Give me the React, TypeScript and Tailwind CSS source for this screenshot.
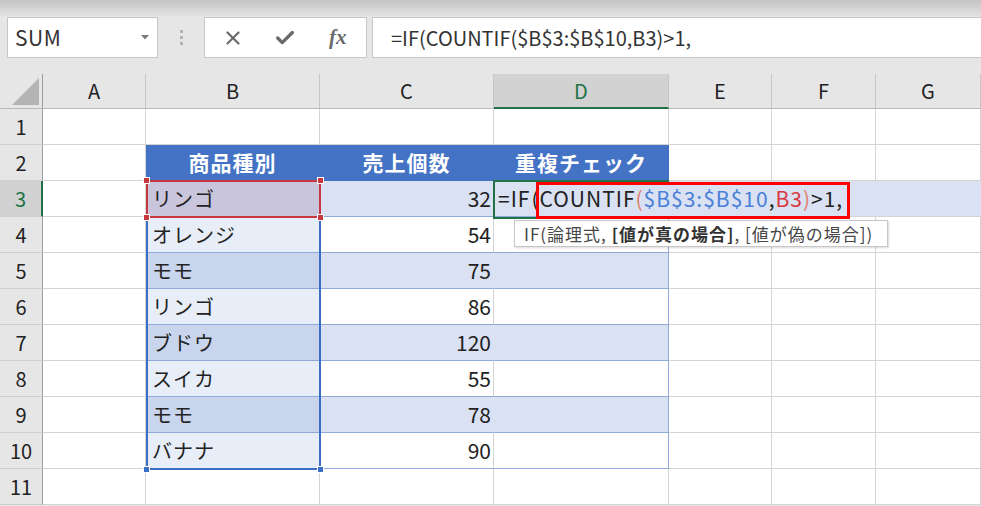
import { X, Check } from "lucide-react";

const rows = [
  { n: 3, name: "リンゴ", qty: 32 },
  { n: 4, name: "オレンジ", qty: 54 },
  { n: 5, name: "モモ", qty: 75 },
  { n: 6, name: "リンゴ", qty: 86 },
  { n: 7, name: "ブドウ", qty: 120 },
  { n: 8, name: "スイカ", qty: 55 },
  { n: 9, name: "モモ", qty: 78 },
  { n: 10, name: "バナナ", qty: 90 },
];

const cols = ["A", "B", "C", "D", "E", "F", "G"];

const gridCell = "border-r border-b border-[#d4d4d4] bg-white";

function RowHeader({ n, active }: { n: number; active?: boolean }) {
  return (
    <div
      className={
        active
          ? "flex items-center justify-center border-b border-b-[#cfcfcf] border-r-2 border-r-[#217346] bg-[#d2d2d2] text-[20px] leading-none text-[#217346]"
          : "flex items-center justify-center border-b border-b-[#cfcfcf] border-r border-r-[#9e9e9e] bg-[#e6e6e6] text-[20px] leading-none text-[#222]"
      }
    >
      {n}
    </div>
  );
}

function Handle({ className }: { className: string }) {
  return <div className={className} />;
}

export default function App() {
  return (
    <div className="relative h-[506px] w-[981px] overflow-hidden bg-[#e6e6e6] font-['Noto_Sans_CJK_JP','Noto_Sans',sans-serif] text-[#222]">
      {/* top strip */}
      <div className="h-[16px] bg-linear-to-b from-[#c4c4c4] to-[#e2e2e2]" />

      {/* formula bar */}
      <div className="mt-[1px] flex h-[41px] items-stretch">
        <div className="ml-[7px] flex w-[151px] items-center justify-between border border-[#c6c6c6] bg-white pl-[7px] pr-[8px]">
          <span className="text-[21px] leading-none tracking-[0.5px] text-[#333]">SUM</span>
          <svg width="8" height="5" viewBox="0 0 8 5">
            <path d="M0 0H8L4 4.5Z" fill="#7b7b7b" />
          </svg>
        </div>
        <div className="flex w-[46px] flex-col items-center justify-center gap-[3px]">
          <div className="h-[3px] w-[3px] bg-[#b3b3b3]" />
          <div className="h-[3px] w-[3px] bg-[#b3b3b3]" />
          <div className="h-[3px] w-[3px] bg-[#b3b3b3]" />
        </div>
        <div className="flex w-[163px] items-center border border-[#c6c6c6] bg-white px-[2px]">
          <div className="flex w-[53px] items-center justify-center">
            <X size={22} strokeWidth={2.4} color="#6b6b6b" />
          </div>
          <div className="flex w-[53px] items-center justify-center">
            <Check size={22} strokeWidth={3.6} color="#6b6b6b" />
          </div>
          <div className="flex w-[53px] items-center justify-center">
            <span className="font-['Liberation_Serif',serif] text-[21px] font-bold italic leading-none text-[#6b6b6b]">
              fx
            </span>
          </div>
        </div>
        <div className="ml-[5px] flex flex-1 items-center border border-r-0 border-[#c6c6c6] bg-white pl-[18px] text-[20px] leading-none text-[#333]">
          =IF(COUNTIF($B$3:$B$10,B3)&gt;1,
        </div>
      </div>

      {/* sheet */}
      <div className="relative mt-[16px] grid grid-cols-[43px_103px_174px_174px_175px_103px_104px_105px] grid-rows-[35px_repeat(11,36px)]">
        {/* corner */}
        <div className="relative border-b border-r border-b-[#b9b9b9] border-r-[#9e9e9e] bg-[#e6e6e6]">
          <svg className="absolute left-0 top-0" width="43" height="35" viewBox="0 0 43 35">
            <polygon points="12,31 39,31 39,4" fill="#b4b4b4" />
          </svg>
        </div>
        {cols.map((c) =>
          c === "D" ? (
            <div
              key={c}
              className="flex items-center justify-center border-b-2 border-r border-b-[#217346] border-r-[#c6c6c6] bg-[#d2d2d2] text-[20px] leading-none text-[#217346]"
            >
              {c}
            </div>
          ) : (
            <div
              key={c}
              className="flex items-center justify-center border-b border-r border-b-[#b9b9b9] border-r-[#c6c6c6] bg-[#e6e6e6] text-[20px] leading-none text-[#222]"
            >
              {c}
            </div>
          )
        )}

        {/* row 1 */}
        <RowHeader n={1} />
        {cols.map((c) => (
          <div key={"r1" + c} className={gridCell} />
        ))}

        {/* row 2 */}
        <RowHeader n={2} />
        <div className={gridCell} />
        <div className="flex items-center justify-center border-b border-r border-[#4472c4] bg-[#4472c4] text-[21px] font-bold leading-none tracking-[1px] text-white">
          商品種別
        </div>
        <div className="flex items-center justify-center border-b border-r border-[#4472c4] bg-[#4472c4] text-[21px] font-bold leading-none tracking-[1px] text-white">
          売上個数
        </div>
        <div className="flex items-center justify-center border-b border-r border-[#4472c4] bg-[#4472c4] text-[21px] font-bold leading-none tracking-[1px] text-white">
          重複チェック
        </div>
        <div className={gridCell} />
        <div className={gridCell} />
        <div className={gridCell} />

        {/* rows 3-10 */}
        {rows.map((r, i) => {
          const banded = i % 2 === 0;
          const bClass =
            r.n === 3
              ? "flex items-center border-b border-r border-b-[#8eaadb] border-r-[#c9c5dc] bg-[#c9c5dc] pl-[6px] text-[20px] leading-none tracking-[1px]"
              : banded
              ? "flex items-center border-b border-r border-b-[#8eaadb] border-r-[#c9d5ec] bg-[#c9d5ec] pl-[6px] text-[20px] leading-none tracking-[1px]"
              : "flex items-center border-b border-r border-b-[#8eaadb] border-r-[#e8eef8] bg-[#e8eef8] pl-[6px] text-[20px] leading-none tracking-[1px]";
          const cClass = banded
            ? "flex items-center justify-end border-b border-r border-b-[#8eaadb] border-r-[#d9e1f2] bg-[#d9e1f2] pr-[2px] text-[21px] leading-none"
            : "flex items-center justify-end border-b border-r border-b-[#8eaadb] border-r-[#d4d4d4] bg-white pr-[2px] text-[21px] leading-none";
          const dClass = banded
            ? "border-b border-r border-[#8eaadb] bg-[#d9e1f2]"
            : "border-b border-r border-[#8eaadb] bg-white";
          return [
            <RowHeader key={"h" + r.n} n={r.n} active={r.n === 3} />,
            <div key={"a" + r.n} className={gridCell} />,
            <div key={"b" + r.n} className={bClass}>
              {r.name}
            </div>,
            <div key={"c" + r.n} className={cClass}>
              {r.qty}
            </div>,
            <div key={"d" + r.n} className={dClass} />,
            <div key={"e" + r.n} className={gridCell} />,
            <div key={"f" + r.n} className={gridCell} />,
            <div key={"g" + r.n} className={gridCell} />,
          ];
        })}

        {/* row 11 */}
        <RowHeader n={11} />
        {cols.map((c) => (
          <div key={"r11" + c} className={gridCell} />
        ))}

        {/* range B3:B10 blue border */}
        <div className="pointer-events-none absolute left-[146px] top-[106px] h-[290px] w-[175px] border-2 border-[#3b6ec5]" />
        <Handle className="absolute left-[143px] top-[392px] h-[7px] w-[7px] border border-white bg-[#3b6ec5]" />
        <Handle className="absolute left-[317px] top-[392px] h-[7px] w-[7px] border border-white bg-[#3b6ec5]" />

        {/* B3 red reference border */}
        <div className="pointer-events-none absolute left-[146px] top-[106px] h-[38px] w-[175px] border-2 border-[#c8373f]" />
        <Handle className="absolute left-[143px] top-[103px] h-[7px] w-[7px] border border-white bg-[#c8373f]" />
        <Handle className="absolute left-[317px] top-[103px] h-[7px] w-[7px] border border-white bg-[#c8373f]" />
        <Handle className="absolute left-[143px] top-[140px] h-[7px] w-[7px] border border-white bg-[#c8373f]" />
        <Handle className="absolute left-[317px] top-[140px] h-[7px] w-[7px] border border-white bg-[#c8373f]" />

        {/* in-cell editor D3 */}
        <div className="absolute left-[495px] top-[107px] flex h-[35px] w-[486px] items-center bg-[#d9e1f2] pl-[3px] text-[21px] leading-none tracking-[1px] text-[#222]">
          <span>=IF</span>
          <span className="ml-[1px]">(</span>
          <span>COUNTIF</span>
          <span className="text-[#e0806c]">(</span>
          <span className="text-[#4a80d8]">$B$3:$B$10</span>
          <span>,</span>
          <span className="text-[#d8383e]">B3</span>
          <span className="text-[#e0806c]">)</span>
          <span>&gt;1,</span>
        </div>
        <div className="pointer-events-none absolute left-[493px] top-[106px] h-[39px] w-[176px] border-2 border-r-0 border-[#217346]" />

        {/* red highlight box */}
        <div className="pointer-events-none absolute left-[536px] top-[108px] h-[37px] w-[314px] border-[3px] border-[#ff0000]" />

        {/* tooltip */}
        <div className="absolute left-[514px] top-[146px] flex h-[27px] w-[374px] items-center whitespace-pre border border-[#c6c6c6] bg-white pl-[9px] text-[17px] leading-none tracking-[1px] text-[#474747] shadow-[1px_1px_2px_rgba(0,0,0,0.15)]">
          <span>IF(論理式, </span>
          <span className="font-bold text-[#333]">[値が真の場合]</span>
          <span>, [値が偽の場合])</span>
        </div>
      </div>
    </div>
  );
}
